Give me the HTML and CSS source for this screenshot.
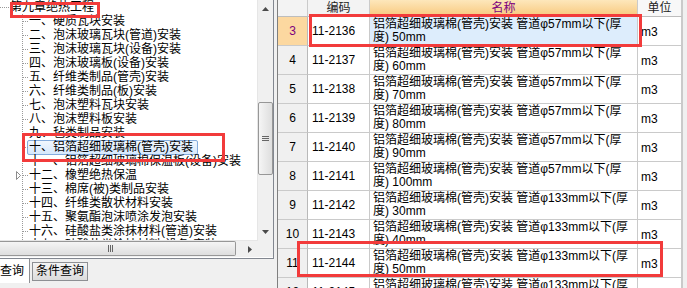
FILE: index.html
```html
<!DOCTYPE html>
<html lang="zh-CN">
<head>
    <meta charset="UTF-8">
    <title>定额章节查询</title>
    <link rel="stylesheet" href="styles.css">
</head>
<body>
    <div class="app">
        <div class="left">
            <div class="tree-box">
                <div class="tree-main">
                    <div class="tree">
                        <div class="root">第九章绝热工程</div>
                        <ul class="children">
                            <li>一、硬质瓦块安装</li>
                            <li>二、泡沫玻璃瓦块(管道)安装</li>
                            <li>三、泡沫玻璃瓦块(设备)安装</li>
                            <li>四、泡沫玻璃板(设备)安装</li>
                            <li>五、纤维类制品(管壳)安装</li>
                            <li>六、纤维类制品(板)安装</li>
                            <li>七、泡沫塑料瓦块安装</li>
                            <li>八、泡沫塑料板安装</li>
                            <li>九、毡类制品安装</li>
                            <li><span class="sel">十、铝箔超细玻璃棉(管壳)安装</span></li>
                            <li>十一、铝箔超细玻璃棉保温板(设备)安装</li>
                            <li class="has-kids">
                                <span class="expander"><svg width="6" height="9" viewBox="0 0 6 9"><path d="M0.5 0.5 L4.5 4.5 L0.5 8.5 Z" fill="#fff" stroke="#8c8c8c"/></svg></span>十二、橡塑绝热保温
                            </li>
                            <li>十三、棉席(被)类制品安装</li>
                            <li>十四、纤维类散状材料安装</li>
                            <li>十五、聚氨酯泡沫喷涂发泡安装</li>
                            <li>十六、硅酸盐类涂抹材料(管道)安装</li>
                            <li>十七、硅酸盐类涂抹材料(设备)安装</li>
                        </ul>
                    </div>
                    <div class="vscroll">
                        <div class="sbtn"><svg width="7" height="4" viewBox="0 0 7 4"><path d="M3.5 0 L7 4 L0 4 Z" fill="#4a4a4a"/></svg></div>
                        <div class="vthumb"><svg width="7" height="5" viewBox="0 0 7 5"><path d="M0 0.5 H7 M0 2.5 H7 M0 4.5 H7" stroke="#666" stroke-width="1"/></svg></div>
                        <div class="track"></div>
                        <div class="sbtn"><svg width="7" height="4" viewBox="0 0 7 4"><path d="M0 0 L7 0 L3.5 4 Z" fill="#4a4a4a"/></svg></div>
                    </div>
                </div>
                <div class="hscroll-row">
                    <div class="hscroll">
                        <div class="hthumb"><svg width="5" height="7" viewBox="0 0 5 7"><path d="M0.5 0 V7 M2.5 0 V7 M4.5 0 V7" stroke="#666" stroke-width="1"/></svg></div>
                        <div class="track"></div>
                        <div class="sbtn"><svg width="4" height="7" viewBox="0 0 4 7"><path d="M0 0 L4 3.5 L0 7 Z" fill="#4a4a4a"/></svg></div>
                    </div>
                    <div class="corner"></div>
                </div>
            </div>
            <div class="tabs">
                <div class="tab active">查询</div>
                <div class="tab">条件查询</div>
            </div>
        </div>

        <div class="right">
            <div class="grid">
                <div class="cell hd"></div>
                <div class="cell hd center">编码</div>
                <div class="cell hd name-hd center">名称</div>
                <div class="cell hd unit-hd center">单位</div>

                <div class="cell num current">3</div>
                <div class="cell code">11-2136</div>
                <div class="cell name picked">铝箔超细玻璃棉(管壳)安装 管道φ57mm以下(厚<br>度) 50mm</div>
                <div class="cell unit">m3</div>

                <div class="cell num">4</div>
                <div class="cell code">11-2137</div>
                <div class="cell name">铝箔超细玻璃棉(管壳)安装 管道φ57mm以下(厚<br>度) 60mm</div>
                <div class="cell unit">m3</div>

                <div class="cell num">5</div>
                <div class="cell code">11-2138</div>
                <div class="cell name">铝箔超细玻璃棉(管壳)安装 管道φ57mm以下(厚<br>度) 70mm</div>
                <div class="cell unit">m3</div>

                <div class="cell num">6</div>
                <div class="cell code">11-2139</div>
                <div class="cell name">铝箔超细玻璃棉(管壳)安装 管道φ57mm以下(厚<br>度) 80mm</div>
                <div class="cell unit">m3</div>

                <div class="cell num">7</div>
                <div class="cell code">11-2140</div>
                <div class="cell name">铝箔超细玻璃棉(管壳)安装 管道φ57mm以下(厚<br>度) 90mm</div>
                <div class="cell unit">m3</div>

                <div class="cell num">8</div>
                <div class="cell code">11-2141</div>
                <div class="cell name">铝箔超细玻璃棉(管壳)安装 管道φ57mm以下(厚<br>度) 100mm</div>
                <div class="cell unit">m3</div>

                <div class="cell num">9</div>
                <div class="cell code">11-2142</div>
                <div class="cell name">铝箔超细玻璃棉(管壳)安装 管道φ133mm以下(厚<br>度) 30mm</div>
                <div class="cell unit">m3</div>

                <div class="cell num">10</div>
                <div class="cell code">11-2143</div>
                <div class="cell name">铝箔超细玻璃棉(管壳)安装 管道φ133mm以下(厚<br>度) 40mm</div>
                <div class="cell unit">m3</div>

                <div class="cell num">11</div>
                <div class="cell code">11-2144</div>
                <div class="cell name">铝箔超细玻璃棉(管壳)安装 管道φ133mm以下(厚<br>度) 50mm</div>
                <div class="cell unit">m3</div>

                <div class="cell num">12</div>
                <div class="cell code">11-2145</div>
                <div class="cell name">铝箔超细玻璃棉(管壳)安装 管道φ133mm以下(厚<br>度) 60mm</div>
                <div class="cell unit">m3</div>
            </div>
            <div class="grid-bar"></div>
        </div>

        <!-- red annotation boxes drawn over the screen -->
        <div class="mark mark-root"></div>
        <div class="mark mark-node"></div>
        <div class="mark mark-row-top"></div>
        <div class="mark mark-row-bottom"></div>
    </div>
</body>
</html>
```

FILE: styles.css
```css
body {
    margin: 0;
    background: #f0f0f0;
    font-family: "Liberation Sans", "Noto Sans CJK SC", sans-serif;
    font-size: 12px;
    color: #000;
}

.app {
    position: relative;
    display: flex;
    width: 687px;
    height: 288px;
    overflow: hidden;
    background: #f0f0f0;
}

/* left: chapter tree */

.left {
    width: 274px;
    padding-right: 3px;
    border-right: 1px solid #7f7f7f;
    display: flex;
    flex-direction: column;
}

.tree-box {
    height: 258px;
    background: #fff;
    border-right: 1px solid #828790;
    border-bottom: 1px solid #828790;
    display: flex;
    flex-direction: column;
}

.tree-main {
    height: 240px;
    display: flex;
}

.tree {
    flex: 1;
    overflow: hidden;
    white-space: nowrap;
    line-height: 14px;
}

.root {
    position: relative;
    height: 14px;
    padding-left: 10px;
}

.root::before {
    content: "";
    position: absolute;
    left: 0;
    top: 7px;
    width: 9px;
    border-top: 1px dotted #9a9a9a;
}

.children {
    list-style: none;
    margin: 0 0 0 22px;
    padding: 0;
    border-left: 1px dotted #9a9a9a;
}

.children li {
    position: relative;
    height: 14px;
    padding-left: 6px;
}

.children li::before {
    content: "";
    position: absolute;
    left: 0;
    top: 7px;
    width: 5px;
    border-top: 1px dotted #9a9a9a;
}

.expander {
    position: absolute;
    left: -7px;
    top: 3px;
    width: 6px;
    height: 9px;
    display: flex;
}

.sel {
    display: inline-block;
    margin-left: -2px;
    padding: 0 4px 0 1px;
    line-height: 13px;
    border: 1px solid #84acdd;
    border-radius: 2px;
    background: linear-gradient(#f1f7fe, #d6e8fc);
}

.vscroll {
    width: 15px;
    display: flex;
    flex-direction: column;
    background: #f0f0f0;
    border-left: 1px solid #e6e6e6;
}

.sbtn {
    height: 17px;
    display: flex;
    align-items: center;
    justify-content: center;
}

.vthumb {
    margin: 85px 0 0 0;
    height: 71px;
    border: 1px solid #979797;
    border-radius: 2px;
    background: linear-gradient(to right, #f5f5f5, #dedede);
    display: flex;
    align-items: center;
    justify-content: center;
}

.track {
    flex: 1;
}

.hscroll-row {
    height: 17px;
    display: flex;
}

.hscroll {
    flex: 1;
    display: flex;
    background: #f0f0f0;
    border-top: 1px solid #e6e6e6;
}

.hscroll .sbtn {
    width: 17px;
    height: auto;
}

.hthumb {
    width: 236px;
    margin: 0 0 1px 0;
    border: 1px solid #979797;
    border-left: none;
    border-radius: 0 2px 2px 0;
    background: linear-gradient(#f5f5f5, #dedede);
    display: flex;
    align-items: center;
    padding-left: 108px;
    box-sizing: border-box;
}

.corner {
    width: 15px;
    background: #f0f0f0;
}

.tabs {
    height: 29px;
    display: flex;
    align-items: flex-start;
    gap: 2px;
}

.tab {
    margin-top: 3px;
    height: 17px;
    line-height: 17px;
    padding: 0 3px;
    border: 1px solid #8d8f93;
    background: linear-gradient(#f4f4f4, #dcdcdc);
}

.tab.active {
    margin-top: 0;
    height: 24px;
    line-height: 24px;
    padding: 0 5px 0 0;
    border: none;
    border-right: 1px solid #8d8f93;
    background: #fff;
}

/* right: quota grid */

.right {
    flex: 1;
    display: flex;
    background: #fff;
}

.grid {
    display: grid;
    grid-template-columns: 30px 62px 268px 44px;
    grid-template-rows: 17px;
    grid-auto-rows: 29px;
    align-content: start;
    overflow: hidden;
}

.cell {
    box-sizing: border-box;
    border-right: 1px solid #cacaca;
    border-bottom: 1px solid #cacaca;
    display: flex;
    align-items: center;
    white-space: nowrap;
    overflow: hidden;
}

.center {
    justify-content: center;
}

.hd {
    background: #f3f3f3;
    color: #222;
    line-height: 16px;
    border-bottom-color: #bdbdbd;
}

.name-hd {
    background: linear-gradient(#fde7bb, #f8c97e);
    color: #7e007e;
}

.unit-hd {
    background: #f8f8f8;
}

.num {
    justify-content: center;
    background: #f0f0f0;
    border-right-color: #b9b9b9;
}

.num.current {
    background: #fcd8a0;
    color: #7e007e;
}

.code {
    padding-left: 4px;
}

.name {
    padding-left: 3px;
    line-height: 13px;
}

.name.picked {
    background: #ddedfc;
}

.unit {
    padding: 1px 0 0 3px;
}

.grid-bar {
    flex: 1;
    background: #f0f0f0;
    border-left: 1px solid #cacaca;
}

/* annotation marks */

.mark {
    position: absolute;
    box-sizing: border-box;
    border: 3px solid #f23b3b;
}

.mark-root {
    left: 10px;
    top: 2px;
    width: 90px;
    height: 16px;
}

.mark-node {
    left: 22px;
    top: 133px;
    width: 203px;
    height: 29px;
}

.mark-row-top {
    left: 309px;
    top: 14px;
    width: 333px;
    height: 33px;
}

.mark-row-bottom {
    left: 297px;
    top: 241px;
    width: 366px;
    height: 36px;
}
```
